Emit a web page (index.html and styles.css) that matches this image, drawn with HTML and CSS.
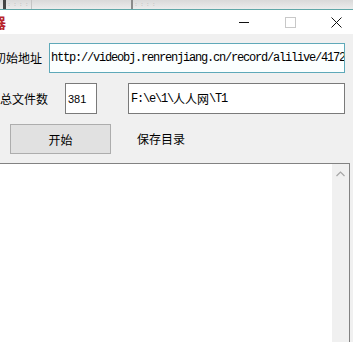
FILE: index.html
```html
<!DOCTYPE html>
<html lang="zh-CN">
<head>
    <meta charset="UTF-8">
    <title>下载器</title>
    <link rel="stylesheet" href="styles.css">
</head>
<body>
    <!-- 任务栏残留 -->
    <div class="taskbar">
        <span class="task-grip"></span>
        <span class="task-item task-first">: : : :</span>
        <span class="task-item task-wide"></span>
        <span class="task-item task-last">: : : :</span>
    </div>

    <div class="window">
        <div class="titlebar">
            <span class="title-text">器</span>
            <span class="title-space"></span>
            <span class="ctrl-btn">
                <svg width="10" height="10" viewBox="0 0 10 10"><path d="M0 5.5h10" stroke="#111" stroke-width="1"/></svg>
            </span>
            <span class="ctrl-btn">
                <svg width="11" height="11" viewBox="0 0 11 11"><rect x="0.5" y="0.5" width="10" height="10" fill="none" stroke="#c8c8c8" stroke-width="1"/></svg>
            </span>
            <span class="ctrl-btn">
                <svg width="11" height="11" viewBox="0 0 11 11"><path d="M0.5 0.5l10 10M10.5 0.5l-10 10" stroke="#111" stroke-width="1"/></svg>
            </span>
        </div>

        <div class="content">
            <div class="form-row row-url">
                <span class="label label-url">初始地址</span>
                <div class="textbox textbox-url">http://videobj.renrenjiang.cn/record/alilive/4172</div>
            </div>

            <div class="form-row row-count">
                <span class="label">总文件数</span>
                <div class="textbox textbox-count">381</div>
                <div class="textbox textbox-dir">F:\e\1\<span class="cjk">人人网</span>\T1</div>
            </div>

            <div class="form-row row-action">
                <button class="start-btn">开始</button>
                <span class="label label-dir">保存目录</span>
            </div>
        </div>

        <div class="log">
            <div class="log-body"></div>
            <div class="scrollbar">
                <svg width="9" height="6" viewBox="0 0 9 6"><path d="M0.5 5l4-4 4 4" fill="none" stroke="#a6a6a6" stroke-width="1.2"/></svg>
            </div>
        </div>
    </div>
</body>
</html>
```

FILE: styles.css
```css
* {
    margin: 0;
    padding: 0;
    box-sizing: border-box;
}

body {
    width: 353px;
    height: 342px;
    overflow: hidden;
    background: #f0f0f0;
    font-family: "Noto Sans CJK SC", "Microsoft YaHei", sans-serif;
    font-size: 12px;
    color: #000;
}

/* 任务栏 */
.taskbar {
    height: 9px;
    display: flex;
    align-items: stretch;
    background: linear-gradient(#d9d9d9, #ececec);
}

.task-grip {
    width: 3px;
    margin-left: 3px;
    background: #444;
}

.task-item {
    font-family: "DejaVu Sans", sans-serif;
    font-size: 6px;
    line-height: 8px;
    color: #b0b0b0;
    letter-spacing: 1px;
    overflow: hidden;
}

.task-first {
    width: 26px;
    padding-left: 2px;
    border-right: 1px solid #c4c4c4;
}

.task-wide {
    width: 101px;
    border-right: 2px solid #8a8a8a;
}

.task-last {
    width: 30px;
    padding-left: 2px;
}

/* 窗口 */
.window {
    width: 359px;
    border-top: 1px solid #5fa7a8;
}

.titlebar {
    height: 24px;
    background: #fff;
    display: flex;
    align-items: center;
}

.title-text {
    margin-left: -8px;
    font-size: 14px;
    font-weight: bold;
    color: #b8242c;
}

.title-space {
    flex: 1;
}

.ctrl-btn {
    width: 46px;
    height: 24px;
    display: flex;
    align-items: center;
    justify-content: center;
}

.content {
    padding-top: 9px;
    display: flex;
    flex-direction: column;
    gap: 10px;
}

.form-row {
    display: flex;
    align-items: center;
}

.row-url {
    height: 30px;
}

.row-count {
    height: 31px;
}

.row-action {
    height: 30px;
}

.label {
    width: 48px;
    white-space: nowrap;
    line-height: 16px;
}

.label-url {
    margin-left: -6px;
    margin-right: 7px;
}

.textbox {
    height: 100%;
    display: flex;
    align-items: center;
    padding-left: 2px;
    background: #fff;
    border: 1px solid #7a7a7a;
    font-family: "Liberation Mono", "Noto Sans CJK SC", monospace;
    font-size: 12px;
    letter-spacing: -1.2px;
    white-space: nowrap;
    overflow: hidden;
}

.textbox .cjk {
    font-family: "Noto Sans CJK SC", sans-serif;
    letter-spacing: 0;
}

.textbox-url {
    width: 296px;
    padding-left: 1px;
    border-color: #5ea9b9;
    background: #fbffff;
}

.textbox-count {
    width: 32px;
    margin-left: 17px;
    font-family: "Liberation Sans", sans-serif;
    letter-spacing: 0;
    font-size: 11px;
}

.textbox-dir {
    width: 217px;
    margin-left: 31px;
}

.start-btn {
    width: 101px;
    height: 30px;
    margin-left: 10px;
    background: #e1e1e1;
    border: 1px solid #adadad;
    font-family: inherit;
    font-size: 12px;
    color: #000;
}

.label-dir {
    margin-left: 26px;
}

/* 日志区域 */
.log {
    margin-top: 9px;
    width: 350px;
    height: 190px;
    display: flex;
    background: #fff;
    border-top: 1px solid #828282;
    border-right: 1px solid #828282;
}

.log-body {
    flex: 1;
}

.scrollbar {
    width: 17px;
    background: #f0f0f0;
    display: flex;
    justify-content: center;
    padding-top: 7px;
}
```
